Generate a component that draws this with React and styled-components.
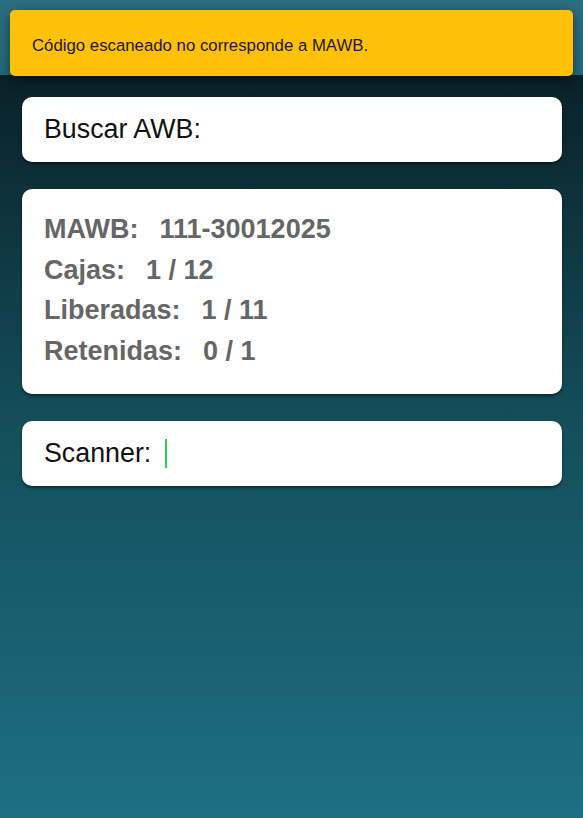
import React from "react";
import styled, { createGlobalStyle } from "styled-components";

const GlobalStyle = createGlobalStyle`
  html, body { margin: 0; padding: 0; }
  body {
    font-family: "Liberation Sans", Arial, sans-serif;
    background: #0a2028;
  }
`;

const Page = styled.div`
  min-height: 818px;
  display: flex;
  flex-direction: column;
  position: relative;
`;

const TopBand = styled.div`
  height: 75px;
  background: linear-gradient(to bottom, #2c6d80, #24687a);
`;

const Main = styled.main`
  flex: 1;
  display: flex;
  flex-direction: column;
  gap: 27px;
  padding: 22px 21px 22px 22px;
  background: linear-gradient(to bottom, #0a2129 0%, #134d59 45%, #1e6f84 100%);
`;

const Toast = styled.div`
  position: absolute;
  top: 10px;
  left: 10px;
  right: 10px;
  height: 66px;
  box-sizing: border-box;
  display: flex;
  align-items: center;
  padding: 5px 22px 0;
  background: #ffc107;
  border-radius: 5px;
  box-shadow: 0 4px 12px rgba(0, 0, 0, 0.45);
  color: #1a1a1a;
  font-size: 16.8px;
`;

const Card = styled.section`
  background: #ffffff;
  border-radius: 10px;
  box-shadow: 0 2px 3px rgba(0, 0, 0, 0.45);
  box-sizing: border-box;
  padding: ${(p) => (p.$info ? "20px 22px 23px" : "0 22px")};
  height: ${(p) => (p.$info ? "205px" : "65px")};
  display: flex;
  flex-direction: ${(p) => (p.$info ? "column" : "row")};
  align-items: ${(p) => (p.$info ? "stretch" : "center")};
`;

const FieldLabel = styled.span`
  font-size: 26.8px;
  color: #111;
`;

const Caret = styled.span`
  display: inline-block;
  width: 2px;
  height: 29px;
  background: #2ecc55;
  margin-left: 14px;
`;

const InfoRow = styled.div`
  display: flex;
  gap: 21px;
  font-size: 27px;
  font-weight: bold;
  line-height: 40.5px;
  color: #666666;
`;

const rows = [
  ["MAWB:", "111-30012025"],
  ["Cajas:", "1 / 12"],
  ["Liberadas:", "1 / 11"],
  ["Retenidas:", "0 / 1"],
];

export default function App() {
  return (
    <>
      <GlobalStyle />
      <Page>
        <TopBand />
        <Main>
          <Card>
            <FieldLabel>Buscar AWB:</FieldLabel>
          </Card>
          <Card $info>
            {rows.map(([k, v]) => (
              <InfoRow key={k}>
                <span>{k}</span>
                <span>{v}</span>
              </InfoRow>
            ))}
          </Card>
          <Card>
            <FieldLabel>Scanner:</FieldLabel>
            <Caret />
          </Card>
        </Main>
        <Toast>Código escaneado no corresponde a MAWB.</Toast>
      </Page>
    </>
  );
}
